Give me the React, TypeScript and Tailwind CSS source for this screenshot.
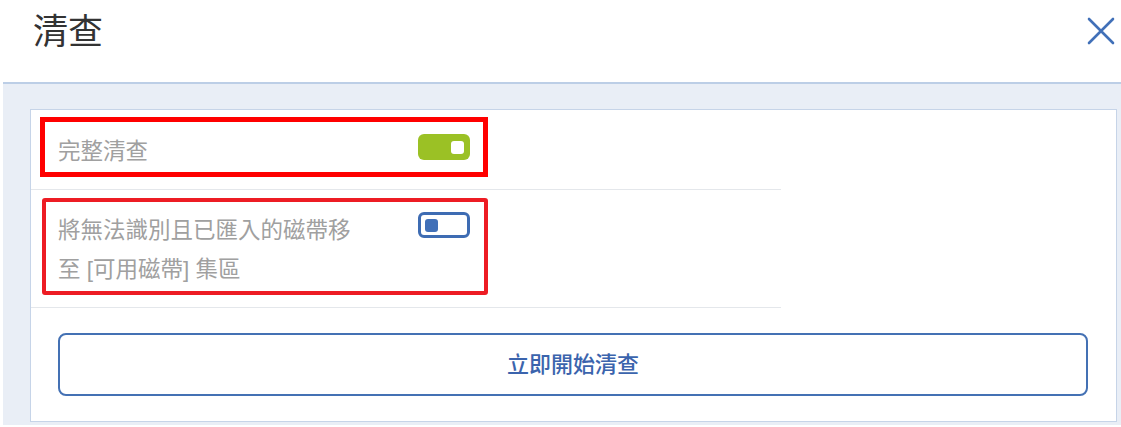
import { useState } from 'react';

const font = 'font-["Liberation_Sans","Noto_Sans_CJK_TC",sans-serif]';

function Toggle({ on, onChange }: { on: boolean; onChange: () => void }) {
  if (on) {
    return (
      <button
        onClick={onChange}
        className="flex h-[26px] w-[52px] shrink-0 items-center justify-end rounded-[6px] bg-[#9bc125] pr-[6px]"
      >
        <span className="h-[13px] w-[13px] rounded-[3px] bg-white" />
      </button>
    );
  }
  return (
    <button
      onClick={onChange}
      className="flex h-[26px] w-[52px] shrink-0 items-center justify-start rounded-[6px] border-[3px] border-[#3e6cb3] bg-white pl-[4px]"
    >
      <span className="h-[13px] w-[13px] rounded-[3px] bg-[#4170b8]" />
    </button>
  );
}

export default function App() {
  const [full, setFull] = useState(true);
  const [move, setMove] = useState(false);

  return (
    <div className={`h-[427px] w-[1121px] overflow-hidden bg-white ${font}`}>
      {/* Header */}
      <div className="flex h-[82px] items-start justify-between pl-[33px] pr-[6px]">
        <h1 className="mt-[11px] text-[35px] font-normal leading-[42px] text-[#333333]">清查</h1>
        <button className="mt-[17px] text-[#4170b8]">
          <svg width="28" height="28" viewBox="0 0 28 28" fill="none" stroke="currentColor" strokeWidth="2.6" strokeLinecap="round">
            <path d="M2 2 L26 26 M26 2 L2 26" />
          </svg>
        </button>
      </div>

      {/* Body band */}
      <div className="ml-[3px] h-[343px] border-t-2 border-[#bccee6] bg-[#e9eef6] pl-[27px] pr-[4px] pt-[25px]">
        <div className="h-[313px] w-[1087px] border border-[#c6d4e8] bg-white">
          <div className="w-[750px]">
            {/* Row 1 */}
            <div className="h-[80px] border-b border-[#e4e7eb] pl-[9px] pt-[7px]">
              <div className="flex h-[60px] w-[448px] items-center justify-between border-[5px] border-[#ff0000] pl-[13px] pr-[13px]">
                <span className="mt-[9px] text-[22.5px] leading-[30px] text-[#a0a0a0]">完整清查</span>
                <Toggle on={full} onChange={() => setFull(!full)} />
              </div>
            </div>

            {/* Row 2 */}
            <div className="h-[118px] border-b border-[#e4e7eb] pl-[11px] pt-[8px]">
              <div className="flex h-[97px] w-[446px] items-start justify-between rounded-[3px] border-[4px] border-[#ed1c24] pl-[12px] pr-[14px] pt-[9px]">
                <p className="text-[22.5px] leading-[39px] text-[#a0a0a0]">
                  將無法識別且已匯入的磁帶移
                  <br />
                  至 [可用磁帶] 集區
                </p>
                <div className="pt-[1px]">
                  <Toggle on={move} onChange={() => setMove(!move)} />
                </div>
              </div>
            </div>
          </div>

          {/* Action */}
          <div className="pl-[27px] pt-[25px]">
            <button className="flex h-[63px] w-[1030px] items-center justify-center rounded-[8px] border-[2.5px] border-[#4471b4] bg-white text-[22px] font-medium text-[#3b64ad]">
              立即開始清查
            </button>
          </div>
        </div>
      </div>
    </div>
  );
}
